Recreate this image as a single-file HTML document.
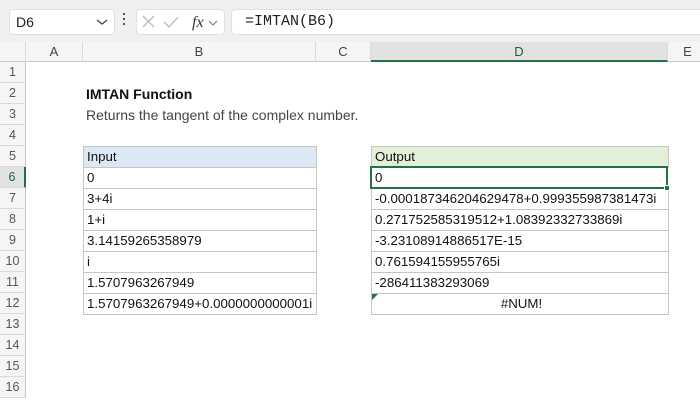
<!DOCTYPE html>
<html><head><style>
*{margin:0;padding:0;box-sizing:border-box}
body{width:700px;height:400px;overflow:hidden;background:#fff;font-family:"Liberation Sans",Arial,sans-serif;position:relative}
.a{position:absolute}
.tb{left:0;top:0;width:700px;height:42px;background:#f0f0f0}
.box{background:#fff;border:1px solid #e0e0e0;border-radius:4px}
.ch{top:42px;height:20px;background:#f5f5f5;border-bottom:1px solid #c8c8c8;border-right:1px solid #dadada;font-size:13px;color:#444;text-align:center;line-height:20px}
.rh{left:0;width:26px;height:21px;background:#f5f5f5;border-bottom:1px solid #dadada;border-right:1px solid #c8c8c8;font-size:12.5px;color:#555;text-align:center;line-height:21px}
.c{height:22px;border:1px solid #c6c6c6;font-size:13.3px;line-height:20px;padding-left:3px;color:#111;white-space:nowrap;overflow:hidden}
</style></head><body>
<div class="a tb"></div>
<div class="a box" style="left:9px;top:9px;width:106px;height:26px;font-size:14px;line-height:24px;padding-left:6px;color:#222">D6</div>
<svg class="a" style="left:96px;top:18px" width="12" height="8"><path d="M1 2l5 4 5-4" stroke="#444" stroke-width="1.3" fill="none"/></svg>
<div class="a" style="left:123px;top:13px;width:2px;height:2px;background:#555;box-shadow:0 5px 0 #555,0 10px 0 #555"></div>
<div class="a box" style="left:136px;top:9px;width:89px;height:26px"></div>
<svg class="a" style="left:140px;top:12px" width="85" height="20"><path d="M3 4l11 11M14 4L3 15" stroke="#bbb" stroke-width="1.3" fill="none"/><path d="M24 10l5 5 9-10" stroke="#bbb" stroke-width="1.3" fill="none"/><text x="52" y="15" font-family="Liberation Serif" font-style="italic" font-size="16" fill="#333">fx</text><path d="M69 9l4 4 4-4" stroke="#777" fill="none"/></svg>
<div class="a box" style="left:231px;top:9px;width:480px;height:26px;font-family:'Liberation Mono',monospace;font-size:15px;line-height:24px;padding-left:13px;color:#222">=IMTAN(B6)</div>

<div class="a ch" style="left:0;width:26px;background:#f5f5f5"></div>
<div class="a ch" style="left:26px;width:57px">A</div>
<div class="a ch" style="left:83px;width:233px">B</div>
<div class="a ch" style="left:316px;width:55px">C</div>
<div class="a ch" style="left:371px;width:297px;background:#e2e2e2;border-bottom:2px solid #217346;color:#1f5f3a">D</div>
<div class="a ch" style="left:668px;width:40px">E</div>

<div class="a rh" style="top:62px">1</div>
<div class="a rh" style="top:83px">2</div>
<div class="a rh" style="top:104px">3</div>
<div class="a rh" style="top:125px">4</div>
<div class="a rh" style="top:146px">5</div>
<div class="a rh" style="top:167px;background:#e2e2e2;border-right:2px solid #217346;color:#1f5f3a">6</div>
<div class="a rh" style="top:188px">7</div>
<div class="a rh" style="top:209px">8</div>
<div class="a rh" style="top:230px">9</div>
<div class="a rh" style="top:251px">10</div>
<div class="a rh" style="top:272px">11</div>
<div class="a rh" style="top:293px">12</div>
<div class="a rh" style="top:314px">13</div>
<div class="a rh" style="top:335px">14</div>
<div class="a rh" style="top:356px">15</div>
<div class="a rh" style="top:377px">16</div>

<div class="a" style="left:86px;top:86px;font-size:14px;font-weight:bold;color:#111">IMTAN Function</div>
<div class="a" style="left:86px;top:107px;font-size:14px;color:#444">Returns the tangent of the complex number.</div>

<div class="a c" style="left:83px;top:146px;width:234px;background:#dde8f5">Input</div>
<div class="a c" style="left:83px;top:167px;width:234px">0</div>
<div class="a c" style="left:83px;top:188px;width:234px">3+4i</div>
<div class="a c" style="left:83px;top:209px;width:234px">1+i</div>
<div class="a c" style="left:83px;top:230px;width:234px">3.14159265358979</div>
<div class="a c" style="left:83px;top:251px;width:234px">i</div>
<div class="a c" style="left:83px;top:272px;width:234px">1.5707963267949</div>
<div class="a c" style="left:83px;top:293px;width:234px">1.5707963267949+0.0000000000001i</div>

<div class="a c" style="left:371px;top:146px;width:298px;background:#e3f0d9">Output</div>
<div class="a c" style="left:371px;top:188px;width:298px">-0.000187346204629478+0.999355987381473i</div>
<div class="a c" style="left:371px;top:209px;width:298px">0.271752585319512+1.08392332733869i</div>
<div class="a c" style="left:371px;top:230px;width:298px">-3.23108914886517E-15</div>
<div class="a c" style="left:371px;top:251px;width:298px">0.761594155955765i</div>
<div class="a c" style="left:371px;top:272px;width:298px">-286411383293069</div>
<div class="a c" style="left:371px;top:293px;width:298px;text-align:center">#NUM!</div>
<div class="a" style="left:372px;top:294px;width:0;height:0;border-top:6px solid #217346;border-right:6px solid transparent"></div>
<div class="a c" style="left:370px;top:166px;width:298px;height:23px;border:2px solid #217346;line-height:19px">0</div>
<div class="a" style="left:664px;top:185px;width:6px;height:6px;background:#217346;border:1px solid #fff"></div>
</body></html>
